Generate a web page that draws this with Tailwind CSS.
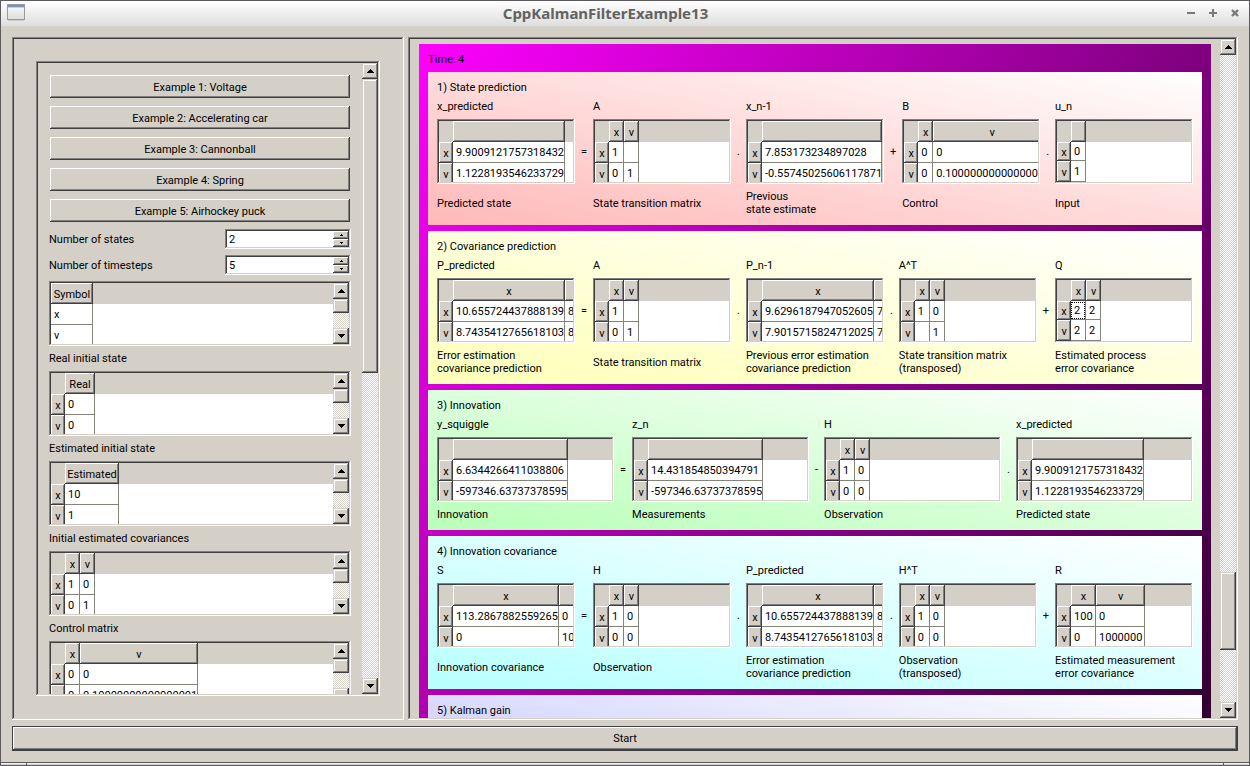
<!DOCTYPE html>
<html lang="en">
<head>
<meta charset="utf-8">
<title>CppKalmanFilterExample13</title>
<script src="https://cdn.jsdelivr.net/npm/@tailwindcss/browser@4"></script>
</head>
<body class="h-screen overflow-hidden bg-[#d4d0c8] font-[Roboto,'Liberation_Sans',sans-serif] text-[11px] leading-[13px] text-black">
<div class="flex h-full flex-col border-x border-t border-[#5c5a5c]">

  <header class="flex h-[25px] shrink-0 items-center bg-linear-to-b from-white to-[#dedede] pr-[9px] pb-[2px] pl-[6px]">
    <svg class="h-[17px] w-[18px] shrink-0" viewBox="0 0 18 17" aria-hidden="true">
      <defs><linearGradient id="win" x2="0" y2="1"><stop stop-color="#fdfdfd"/><stop offset="1" stop-color="#dcdcdc"/></linearGradient></defs>
      <rect x=".5" y=".5" width="17" height="15" fill="url(#win)" stroke="#9a9a98"/>
      <rect x="1" y="1" width="16" height="2" fill="#7496c4"/><rect x="1" y="3" width="16" height="1" fill="#c3d3e8"/>
      <rect x="1" y="16" width="16" height="1" fill="#c8c8c6"/>
    </svg>
    <h1 class="flex-1 text-center font-['Noto_Sans',sans-serif] text-[15px] leading-[20px] font-bold text-[#636363]">CppKalmanFilterExample13</h1>
    <div class="flex gap-[12px]">
      <button aria-label="Minimize" class="flex size-[10px] items-center justify-center"><svg width="8" height="8"><path d="M0 3h8v2H0z" fill="#7b7977"/></svg></button>
      <button aria-label="Maximize" class="flex size-[10px] items-center justify-center"><svg width="8" height="8"><path d="M0 3h8v2H0zM3 0h2v8H3z" fill="#7b7977"/></svg></button>
      <button aria-label="Close" class="flex size-[10px] items-center justify-center"><svg width="8" height="8"><path d="M1 1l6 6M7 1l-6 6" stroke="#7b7977" stroke-width="2.4"/></svg></button>
    </div>
  </header>

  <main class="flex min-h-0 flex-1 flex-col px-[11px] pt-[11px] pb-[11px]">
    <div class="flex min-h-0 flex-1 gap-[4px]">

      <section class="w-[392px] shrink-0 p-[24px] shadow-[inset_-1px_-1px_#fff,inset_1px_1px_#808080,inset_-2px_-2px_#d4d0c8,inset_2px_2px_#404040]">
        <div class="h-full p-[2px] shadow-[inset_-1px_-1px_#fff,inset_1px_1px_#808080,inset_-2px_-2px_#d4d0c8,inset_2px_2px_#404040]">
          <div class="flex h-full">
            <form id="params" class="flex min-w-0 flex-1 flex-col gap-[6px] overflow-hidden p-[11px]"></form>
            <div class="flex w-[16px] shrink-0 flex-col bg-[repeating-conic-gradient(#fff_0_25%,#d4d0c8_0_50%)] bg-[length:2px_2px]" data-bar="294"></div>
          </div>
        </div>
      </section>

      <section class="min-w-0 flex-1 p-[2px] shadow-[inset_-1px_-1px_#fff,inset_1px_1px_#808080,inset_-2px_-2px_#d4d0c8,inset_2px_2px_#404040]">
        <div class="flex h-full">
          <div class="min-w-0 flex-1 overflow-hidden px-[9px] pt-[5px]">
            <div class="flex min-h-[1090px] flex-col gap-[6px] bg-linear-[to_bottom_right,#ff00ff,#000000] p-[9px]">
              <h2>Time: 4</h2>
              <div id="steps" class="flex flex-col gap-[6px]"></div>
            </div>
          </div>
          <div class="flex w-[16px] shrink-0 flex-col bg-[repeating-conic-gradient(#fff_0_25%,#d4d0c8_0_50%)] bg-[length:2px_2px]" data-bar="78" data-offset="517"></div>
        </div>
      </section>
    </div>

    <button class="mt-[6px] h-[25px] shrink-0 border border-[#404040] shadow-[inset_-1px_-1px_#404040,inset_1px_1px_#fff,inset_-2px_-2px_#808080]">Start</button>
  </main>

  <footer class="flex h-[4px] shrink-0 items-stretch border-y border-[#5c5a5c] bg-linear-to-b from-white to-[#c4c4c4]">
    <div class="w-[26px] border-r border-[#5c5a5c]"></div><div class="flex-1"></div><div class="w-[26px] border-l border-[#5c5a5c]"></div>
  </footer>
</div>

<script>
const arrowUp = '<svg width="7" height="4" aria-hidden="true"><path d="M3 0h1v1h1v1h1v1h1v1H0V3h1V2h1V1h1z"/></svg>';
const arrowDown = '<svg width="7" height="4" aria-hidden="true"><path d="M0 0h7v1H6v1H5v1H4v1H3V3H2V2H1V1H0z"/></svg>';
const smallUp = '<svg width="3" height="2" aria-hidden="true"><path d="M1 0h1v1h1v1H0V1h1z"/></svg>';
const smallDown = '<svg width="3" height="2" aria-hidden="true"><path d="M0 0h3v1H2v1H1V1H0z"/></svg>';

// Scroll bar contents: arrow, optional gap, thumb, track, arrow
function bar(thumb, offset) {
  const btn = 'flex h-[16px] w-full shrink-0 items-center justify-center bg-[#d4d0c8] shadow-[inset_-1px_-1px_#404040,inset_1px_1px_#d4d0c8,inset_-2px_-2px_#808080,inset_2px_2px_#fff]';
  return `<button type="button" aria-label="Scroll up" class="${btn}">${arrowUp}</button>
    <div class="shrink-0" style="height:${offset}px"></div>
    <div class="shrink-0 bg-[#d4d0c8] shadow-[inset_-1px_-1px_#404040,inset_1px_1px_#d4d0c8,inset_-2px_-2px_#808080,inset_2px_2px_#fff]" style="height:${thumb}px"></div>
    <div class="flex-1"></div>
    <button type="button" aria-label="Scroll down" class="${btn}">${arrowDown}</button>`;
}

// t = {cols:[[label,width]...], rows:[[header, ...cells]...], noHead, short, focus, label}
function grid(t, scroll) {
  const bevel = 'overflow-hidden bg-[#d4d0c8] p-0 pt-px text-center font-normal whitespace-nowrap shadow-[inset_-1px_-1px_#404040,inset_1px_1px_#fff,inset_-2px_-2px_#808080]';
  const cell = 'overflow-hidden border-r border-b border-[#848478] bg-white p-0 pt-px pl-[3px] text-left whitespace-nowrap';
  const width = t.cols.reduce((s, c) => s + c[1], t.noHead ? 0 : 14);
  const colgroup = (t.noHead ? '' : '<col style="width:14px">') + t.cols.map(c => `<col style="width:${c[1]}px">`).join('');
  const head = (t.noHead ? '' : '<td class="bg-[#d4d0c8] p-0"></td>') + t.cols.map(c => `<th scope="col" class="${bevel}">${c[0]}</th>`).join('');
  const body = t.rows.map((r, i) => {
    const th = t.noHead ? '' : `<th scope="row" class="${bevel}">${r[0]}</th>`;
    const cells = (t.noHead ? r : r.slice(1)).map((v, j) =>
      `<td class="${cell}">${t.focus && !i && !j ? `<span class="-ml-[3px] block h-[17px] border border-dotted border-black pl-[2px] leading-[15px]">${v}</span>` : v}</td>`).join('');
    return `<tr class="${t.short && !i ? 'h-[19px]' : 'h-[21px]'}">${th}${cells}</tr>`;
  }).join('');
  return `<div class="p-[2px] shadow-[inset_-1px_-1px_#fff,inset_1px_1px_#808080,inset_-2px_-2px_#d4d0c8,inset_2px_2px_#404040]">
    <div class="flex h-[61px] overflow-hidden bg-[linear-gradient(#d4d0c8_21px,#fff_21px)]">
      <div class="min-w-0 flex-1 overflow-hidden"><table aria-label="${t.label}" class="table-fixed border-separate border-spacing-0" style="width:${width}px">
        <colgroup>${colgroup}</colgroup><thead><tr class="h-[21px]">${head}</tr></thead><tbody>${body}</tbody></table></div>
      ${scroll ? `<div class="flex w-[16px] shrink-0 flex-col bg-[repeating-conic-gradient(#fff_0_25%,#d4d0c8_0_50%)] bg-[length:2px_2px]">${bar(14, 0)}</div>` : ''}
    </div></div>`;
}

function spin(id, label, value) {
  const b = 'flex h-[8px] w-[16px] items-center justify-center bg-[#d4d0c8] shadow-[inset_-1px_-1px_#404040,inset_1px_1px_#fff,inset_-2px_-2px_#808080]';
  return `<div class="flex shrink-0 items-center justify-between"><label for="${id}">${label}</label>
    <div class="flex w-[126px] p-[2px] shadow-[inset_-1px_-1px_#fff,inset_1px_1px_#808080,inset_-2px_-2px_#d4d0c8,inset_2px_2px_#404040]">
      <input id="${id}" type="text" inputmode="numeric" value="${value}" class="h-[16px] min-w-0 flex-1 bg-white pt-px pl-[2px] outline-none">
      <div class="flex flex-col"><button type="button" aria-label="Increase" class="${b}">${smallUp}</button><button type="button" aria-label="Decrease" class="${b}">${smallDown}</button></div>
    </div></div>`;
}

const xv = [['x', 15], ['v', 15]];
const examples = ['Example 1: Voltage', 'Example 2: Accelerating car', 'Example 3: Cannonball', 'Example 4: Spring', 'Example 5: Airhockey puck'];
const inputs = [
  ['', {label: 'Symbol', noHead: true, cols: [['Symbol', 42]], rows: [['x'], ['v']]}],
  ['Real initial state', {cols: [['Real', 30]], rows: [['x', '0'], ['v', '0']]}],
  ['Estimated initial state', {cols: [['Estimated', 54]], rows: [['x', '10'], ['v', '1']]}],
  ['Initial estimated covariances', {cols: xv, rows: [['x', '1', '0'], ['v', '0', '1']]}],
  ['Control matrix', {cols: [['x', 15], ['v', 118]], rows: [['x', '0', '0'], ['v', '0', '0.10000000000000001']]}]
];
document.getElementById('params').innerHTML =
  examples.map(e => `<button type="button" class="m-px h-[23px] shrink-0 pt-px shadow-[inset_-1px_-1px_#404040,inset_1px_1px_#fff,inset_-2px_-2px_#808080]">${e}</button>`).join('') +
  spin('states', 'Number of states', 2) + spin('timesteps', 'Number of timesteps', 5) +
  inputs.map(([l, t]) => `${l ? `<h3 class="shrink-0">${l}</h3>` : ''}<div class="shrink-0">${grid({label: l, ...t}, true)}</div>`).join('');

const predicted = {cols: [['', 112]], rows: [['x', '9.9009121757318432'], ['v', '1.1228193546233729']]};
const A = {cols: xv, rows: [['x', '1', ''], ['v', '0', '1']]};
const H = {cols: xv, rows: [['x', '1', '0'], ['v', '0', '0']]};
const P = {cols: [['x', 112], ['', 112]], rows: [['x', '10.655724437888139', '8'], ['v', '8.7435412765618103', '8']]};
const steps = [
  ['1) State prediction', 'flex flex-col gap-[6px] bg-linear-[to_top_right,#ffb8b8,#ffffff] p-[9px]', [
    ['x_predicted', predicted, 'Predicted state'], '=',
    ['A', A, 'State transition matrix'], '.',
    ['x_n-1', {cols: [['', 120]], rows: [['x', '7.853173234897028'], ['v', '-0.55745025606117871']]}, 'Previous<br>state estimate'], '+',
    ['B', {cols: [['x', 15], ['v', 118]], rows: [['x', '0', '0'], ['v', '0', '0.10000000000000001']]}, 'Control'], '.',
    ['u_n', {short: true, cols: [['', 15]], rows: [['x', '0'], ['v', '1']]}, 'Input']]],
  ['2) Covariance prediction', 'flex flex-col gap-[6px] bg-linear-[to_top_right,#ffffb8,#ffffff] p-[9px]', [
    ['P_predicted', P, 'Error estimation<br>covariance prediction'], '=',
    ['A', A, 'State transition matrix'], '.',
    ['P_n-1', {cols: [['x', 112], ['', 112]], rows: [['x', '9.6296187947052605', '7'], ['v', '7.9015715824712025', '7']]}, 'Previous error estimation<br>covariance prediction'], '.',
    ['A^T', {cols: xv, rows: [['x', '1', '0'], ['v', '', '1']]}, 'State transition matrix<br>(transposed)'], '+',
    ['Q', {short: true, focus: true, cols: xv, rows: [['x', '2', '2'], ['v', '2', '2']]}, 'Estimated process<br>error covariance']]],
  ['3) Innovation', 'flex flex-col gap-[6px] bg-linear-[to_top_right,#b8ffb8,#ffffff] p-[9px]', [
    ['y_squiggle', {cols: [['', 115]], rows: [['x', '6.6344266411038806'], ['v', '-597346.63737378595']]}, 'Innovation'], '=',
    ['z_n', {cols: [['', 115]], rows: [['x', '14.431854850394791'], ['v', '-597346.63737378595']]}, 'Measurements'], '-',
    ['H', H, 'Observation'], '.',
    ['x_predicted', predicted, 'Predicted state']]],
  ['4) Innovation covariance', 'flex flex-col gap-[6px] bg-linear-[to_top_right,#b8ffff,#ffffff] p-[9px]', [
    ['S', {cols: [['x', 106], ['', 106]], rows: [['x', '113.2867882559265', '0'], ['v', '0', '10']]}, 'Innovation covariance'], '=',
    ['H', H, 'Observation'], '.',
    ['P_predicted', P, 'Error estimation<br>covariance prediction'], '.',
    ['H^T', H, 'Observation<br>(transposed)'], '+',
    ['R', {cols: [['x', 25], ['v', 49]], rows: [['x', '100', '0'], ['v', '0', '1000000']]}, 'Estimated measurement<br>error covariance']]],
  ['5) Kalman gain', 'flex min-h-[153px] flex-col gap-[6px] bg-linear-[to_top_right,#b8b8ff,#ffffff] p-[9px]', []]
];
document.getElementById('steps').innerHTML = steps.map(([title, cls, parts]) => `<article class="${cls}"><h3>${title}</h3>
  <div class="flex gap-[6px]">${parts.map(p => typeof p === 'string'
    ? `<div class="mt-[19px] flex h-[65px] items-center">${p}</div>`
    : `<div class="flex min-w-0 flex-1 flex-col gap-[6px]"><h4>${p[0]}</h4>${grid({label: p[0], ...p[1]})}<p class="flex flex-1 items-center whitespace-nowrap"><span>${p[2]}</span></p></div>`).join('')}</div></article>`).join('');

document.querySelectorAll('[data-bar]').forEach(el => { el.innerHTML = bar(el.dataset.bar, el.dataset.offset || 0); });
</script>
</body>
</html>
